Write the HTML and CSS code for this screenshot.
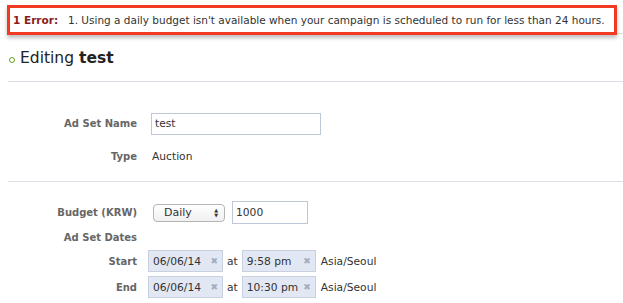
FILE: index.html
```html
<!DOCTYPE html>
<html>
<head>
    <title>Edit Ad Set</title>
    <link rel="stylesheet" href="styles.css">
</head>
<body>
    <div class="page">
        <div class="top-bar">
            <div class="error-box">
                <span class="error-title">1 Error:</span>
                <span class="error-text">1. Using a daily budget isn't available when your campaign is scheduled to run for less than 24 hours.</span>
            </div>
        </div>

        <h1 class="title"><span class="dot"></span>Editing <b>test</b></h1>

        <div class="section">
            <div class="row">
                <label class="label">Ad Set Name</label>
                <input class="text-input name-input" type="text" value="test">
            </div>
            <div class="row">
                <label class="label">Type</label>
                <span class="value">Auction</span>
            </div>
        </div>

        <div class="section budget">
            <div class="row">
                <label class="label">Budget (KRW)</label>
                <div class="controls">
                    <div class="select">Daily<span class="arrows">&#9650;<br>&#9660;</span></div>
                    <input class="text-input amount" type="text" value="1000">
                </div>
            </div>
            <div class="row dates-head">
                <label class="label">Ad Set Dates</label>
            </div>
            <div class="row date-row">
                <label class="label">Start</label>
                <div class="controls">
                    <span class="token date">06/06/14<span class="x">&#10006;</span></span>
                    <span class="at">at</span>
                    <span class="token time">9:58 pm<span class="x">&#10006;</span></span>
                    <span class="tz">Asia/Seoul</span>
                </div>
            </div>
            <div class="row date-row">
                <label class="label">End</label>
                <div class="controls">
                    <span class="token date">06/06/14<span class="x">&#10006;</span></span>
                    <span class="at">at</span>
                    <span class="token time">10:30 pm<span class="x">&#10006;</span></span>
                    <span class="tz">Asia/Seoul</span>
                </div>
            </div>
            <div class="note">Your ad set will run until you pause it or until the budget is spent.</div>
        </div>
    </div>
</body>
</html>
```

FILE: styles.css
```css
body {
    margin: 0;
    background: #fff;
    font-family: "DejaVu Sans", Verdana, sans-serif;
    font-size: 10.7px;
    color: #333;
    overflow: hidden;
}
.page {
    padding: 0 0 0 8px;
}
.top-bar {
    position: relative;
    height: 33px;
    border-bottom: 1px solid #dcdfe5;
}
.error-box {
    position: absolute;
    left: -1px;
    top: 5px;
    width: 604px;
    height: 24px;
    border: 3px solid #f03a22;
    background: #fff;
    box-shadow: 0 3px 4px rgba(0,0,0,0.25);
    display: flex;
    align-items: center;
    white-space: nowrap;
    font-size: 10.5px;
}
.error-title {
    color: #8b1c1c;
    font-weight: bold;
    padding-left: 3px;
    width: 55px;
}
.error-text {
    color: #333;
}
.title {
    margin: 0;
    height: 47px;
    display: flex;
    align-items: center;
    font-size: 15.5px;
    font-weight: normal;
    color: #222;
    border-bottom: 1px solid #dcdfe5;
}
.title b {
    margin-left: 5px;
}
.dot {
    width: 4px;
    height: 4px;
    border: 1px solid #6a9a23;
    border-radius: 50%;
    margin: 4px 5px 0 1px;
}
.section {
    padding: 25px 0 8px;
    border-bottom: 1px solid #dcdfe5;
}
.row {
    display: flex;
    align-items: center;
    min-height: 33px;
}
.label {
    width: 129px;
    text-align: right;
    font-weight: bold;
    font-size: 10px;
    color: #666;
    padding-right: 14px;
}
.value {
    padding-left: 1px;
}
.text-input {
    font: inherit;
    color: #333;
    border: 1px solid #bdc7d8;
    padding: 3px 3px;
    height: 14px;
    box-sizing: content-box;
    outline: none;
}
.name-input {
    width: 162px;
}
.budget {
    border-bottom: none;
    padding-top: 14px;
}
.controls {
    display: flex;
    align-items: center;
}
.select {
    position: relative;
    margin-left: 2px;
    width: 60px;
    height: 16px;
    line-height: 16px;
    padding-left: 10px;
    border: 1px solid #b5b5b5;
    border-radius: 4px;
    background: linear-gradient(#fff, #f0f0f0);
    font-size: 11px;
}
.arrows {
    position: absolute;
    right: 6px;
    top: 3px;
    font-size: 5px;
    line-height: 5px;
}
.amount {
    width: 68px;
    margin-left: 7px;
    height: 15px;
}
.dates-head {
    min-height: 17px;
    margin-bottom: 2px;
}
.date-row {
    min-height: 26px;
}
.date-row .label {
    padding-right: 11px;
}
.token {
    display: flex;
    align-items: center;
    justify-content: space-between;
    height: 22px;
    padding: 0 4px 0 4px;
    background: #e2e8f3;
    border: 1px solid #c9d1e0;
    box-sizing: border-box;
}
.token.date {
    width: 75px;
}
.token.time {
    width: 74px;
}
.x {
    color: #a3adbf;
    font-size: 9px;
}
.at {
    margin: 0 4px;
}
.tz {
    margin-left: 5px;
}
.note {
    margin: 4px 0 0 140px;
    color: #aaa;
}
```
